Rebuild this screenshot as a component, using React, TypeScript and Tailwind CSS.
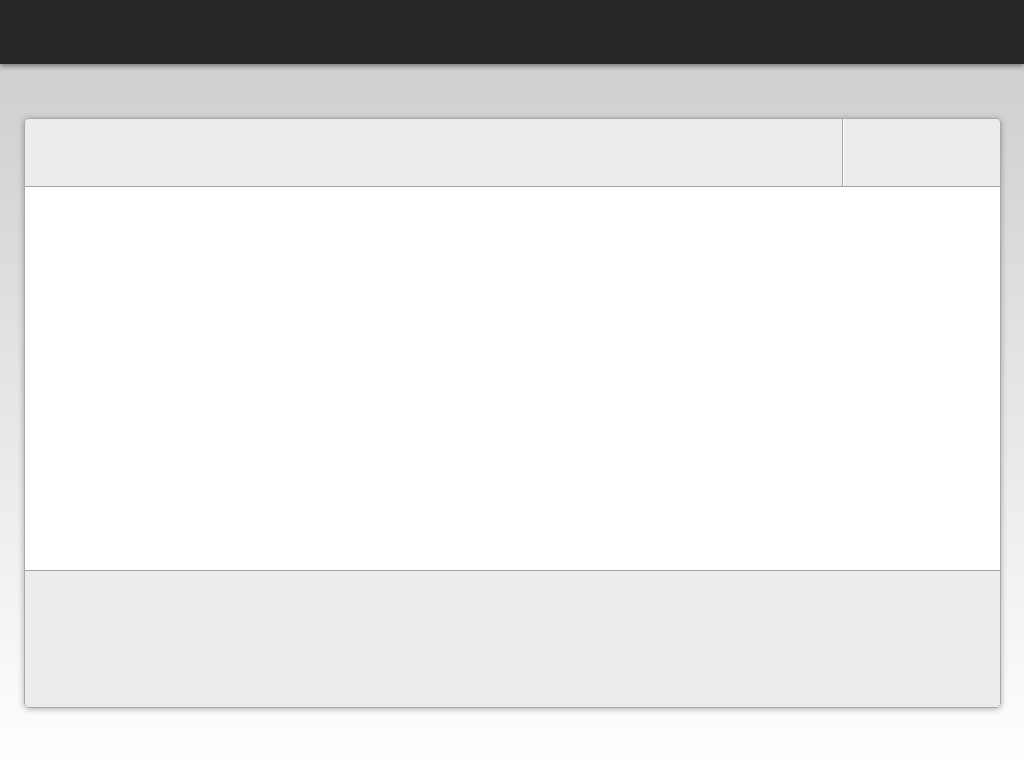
import React from "react";

const App: React.FC = () => {
  return (
    <div className="flex min-h-screen flex-col bg-gradient-to-b from-[#cbcbcb] to-[#ffffff] font-['Liberation_Sans',sans-serif]">
      <header className="relative z-10 h-16 w-full bg-[#272727] shadow-[0_2px_5px_rgba(0,0,0,0.45)]" />

      <main className="pl-6 pr-[23px] pt-[54px]">
        <div className="flex h-[590px] flex-col overflow-hidden rounded-[5px] border border-[#a8a8a8] shadow-[0_1px_6px_rgba(0,0,0,0.3)]">
          <div className="flex h-[68px] border-b border-[#a3a3a3] bg-[#ececec]">
            <div className="flex-1" />
            <div className="w-px bg-[#a8a8a8]" />
            <div className="w-[157px] border-l border-white" />
          </div>
          <div className="flex-1 bg-white" />
          <div className="h-[137px] border-t border-[#a3a3a3] bg-[#ececec]" />
        </div>
      </main>
    </div>
  );
};

export default App;
